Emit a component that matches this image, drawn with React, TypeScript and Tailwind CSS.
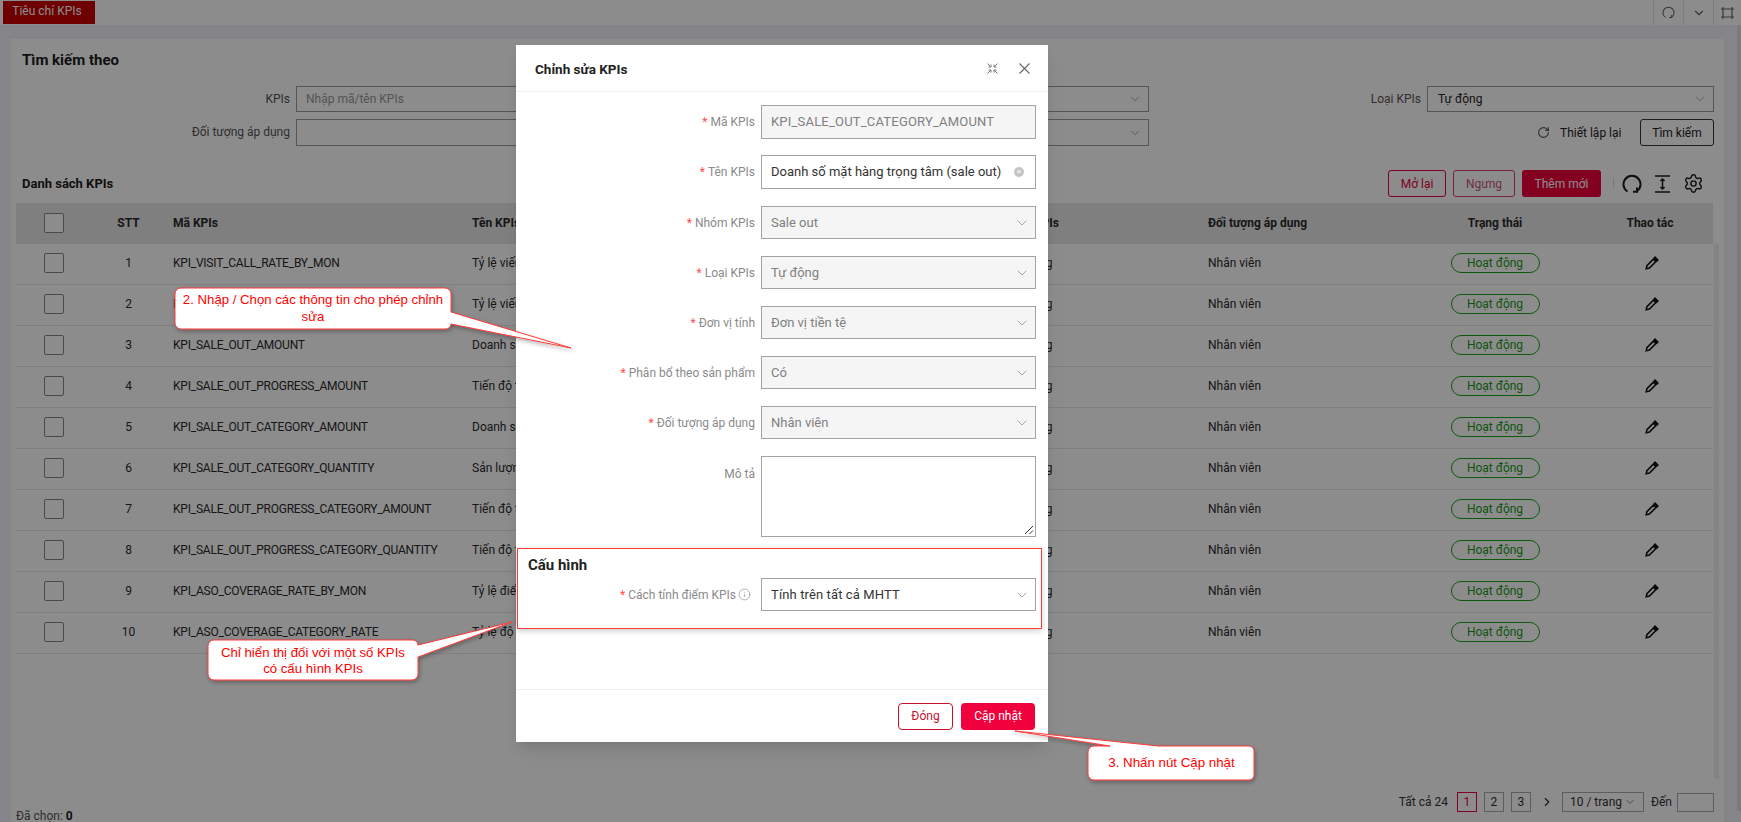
import { ChevronDown, RotateCw, Settings, Info, ChevronRight } from 'lucide-react';

const ROWS = [
  { code: 'KPI_VISIT_CALL_RATE_BY_MON', name: 'Tỷ lệ viếng' },
  { code: 'KPI_VISIT_CALL_RATE', name: 'Tỷ lệ viếng' },
  { code: 'KPI_SALE_OUT_AMOUNT', name: 'Doanh số' },
  { code: 'KPI_SALE_OUT_PROGRESS_AMOUNT', name: 'Tiến độ t' },
  { code: 'KPI_SALE_OUT_CATEGORY_AMOUNT', name: 'Doanh số' },
  { code: 'KPI_SALE_OUT_CATEGORY_QUANTITY', name: 'Sản lượng' },
  { code: 'KPI_SALE_OUT_PROGRESS_CATEGORY_AMOUNT', name: 'Tiến độ t' },
  { code: 'KPI_SALE_OUT_PROGRESS_CATEGORY_QUANTITY', name: 'Tiến độ t' },
  { code: 'KPI_ASO_COVERAGE_RATE_BY_MON', name: 'Tỷ lệ điểm' },
  { code: 'KPI_ASO_COVERAGE_CATEGORY_RATE', name: 'Tỷ lệ độ' },
];

const FIELDS = [
  { label: 'Nhóm KPIs', value: 'Sale out' },
  { label: 'Loại KPIs', value: 'Tự động' },
  { label: 'Đơn vị tính', value: 'Đơn vị tiền tệ' },
  { label: 'Phân bổ theo sản phẩm', value: 'Có' },
  { label: 'Đối tượng áp dụng', value: 'Nhân viên' },
];

function Label({ text, required = true }: { text: string; required?: boolean }) {
  return (
    <div className="w-[245px] shrink-0 text-right text-[12px] text-[#8a8a8a] pr-[6px]">
      {required && <span className="text-[#ff4d4f] mr-[3px]">*</span>}
      {text}
    </div>
  );
}

function ExpandIcon() {
  return (
    <svg width="11" height="11" viewBox="0 0 11 11" fill="none" stroke="#777" strokeWidth="1">
      <path d="M0.5 0.5 3.5 3.5M10.5 0.5 7.5 3.5M0.5 10.5 3.5 7.5M10.5 10.5 7.5 7.5" />
      <path d="M4 1.5V4H1.5M7 1.5V4H9.5M4 9.5V7H1.5M7 9.5V7H9.5" />
    </svg>
  );
}

function CloseIcon() {
  return (
    <svg width="11" height="11" viewBox="0 0 11 11" fill="none" stroke="#666" strokeWidth="1.1">
      <path d="M0.5 0.5 10.5 10.5M10.5 0.5 0.5 10.5" />
    </svg>
  );
}

function HeightIcon() {
  return (
    <svg width="17" height="18" viewBox="0 0 17 18" fill="none" stroke="#1a1a1a" strokeWidth="1.5">
      <path d="M1 1h15M1 17h15M8.5 4v10M6.5 6l2-2 2 2M6.5 12l2 2 2-2" />
    </svg>
  );
}

function ReloadIcon({ size = 20, color = '#1a1a1a', stroke = 2 }: { size?: number; color?: string; stroke?: number }) {
  return (
    <svg width={size} height={size} viewBox="0 0 20 20" fill="none" stroke={color} strokeWidth={stroke}>
      <path d="M5.5 17.5A8.5 8.5 0 1 1 14.5 17.5" />
      <path d="M15 13.5v4.3h-4" />
    </svg>
  );
}

function PencilIcon() {
  return (
    <svg width="14" height="14" viewBox="0 0 14 14" fill="none" stroke="#111" strokeWidth="1.6">
      <path d="M1.2 12.8l.7-3.2 6.5-6.5 2.5 2.5-6.5 6.5z" />
      <path d="M9 2.2l1-1 2.8 2.8-1 1z" fill="#111" />
    </svg>
  );
}

function Background() {
  return (
    <div className="h-[822px] overflow-hidden bg-[#f2f3f9] text-[12px] text-[#222]">
      {/* top bar */}
      <div className="h-[25px] bg-white flex items-center justify-between">
        <div className="ml-[3px] mt-[-1px] h-[23px] w-[92px] bg-[#c80000] text-white text-[12px] pr-[4px] pb-[2px] flex items-center justify-center">Tiêu chí KPIs</div>
        <div className="flex h-full items-center text-[#666]">
          <div className="w-[30px] h-full border-l border-[#e6e6e6] flex items-center justify-center"><ReloadIcon size={13} color="#666" stroke={1.6} /></div>
          <div className="w-[30px] h-full border-l border-[#e6e6e6] flex items-center justify-center"><ChevronDown size={14} /></div>
          <div className="w-[28px] h-full border-l border-[#e6e6e6] flex items-center justify-center">
            <svg width="13" height="12" viewBox="0 0 13 12" fill="none" stroke="#666" strokeWidth="1.2">
              <path d="M2 2h9v8H2zM0 2h3M10 2h3M0 10h3M10 10h3M2 0v3M11 0v3M2 9v3M11 9v3" />
            </svg>
          </div>
        </div>
      </div>

      <div className="flex">
        <div className="ml-[11px] mt-[14px] w-[1713px] h-[783px] bg-white flex flex-col">
          <div className="pl-[11px] pt-[10px] text-[15px] font-bold h-[47px] text-[#1c1c1c]">Tìm kiếm theo</div>

          {/* filter */}
          <div className="flex items-start">
            <div className="w-[285px] text-right pr-[6px] leading-[26px] text-[#555]">KPIs</div>
            <div className="w-[443px] h-[26px] border border-[#9b9b9b] pl-[9px] leading-[24px] text-[#999]">Nhập mã/tên KPIs</div>
            <div className="w-[410px] h-[26px] border border-[#9b9b9b] flex items-center justify-end pr-[6px] text-[#999]"><ChevronDown size={14} strokeWidth={1.4} /></div>
            <div className="w-[278px] text-right pr-[6px] leading-[26px] text-[#555]">Loại KPIs</div>
            <div className="w-[287px] h-[26px] border border-[#9b9b9b] pl-[10px] pr-[6px] leading-[24px] flex items-center justify-between">
              Tự động
              <ChevronDown size={14} strokeWidth={1.4} className="text-[#999]" />
            </div>
          </div>
          <div className="flex items-start mt-[7px]">
            <div className="w-[285px] text-right pr-[6px] leading-[27px] text-[#555]">Đối tượng áp dụng</div>
            <div className="w-[443px] h-[27px] border border-[#9b9b9b]"></div>
            <div className="w-[410px] h-[27px] border border-[#9b9b9b] flex items-center justify-end pr-[6px] text-[#999]"><ChevronDown size={14} strokeWidth={1.4} /></div>
            <div className="flex items-center ml-[388px]">
              <RotateCw size={13} className="text-[#555]" />
              <span className="ml-[10px] w-[80px]">Thiết lập lại</span>
              <div className="w-[74px] h-[27px] border border-[#333] rounded-[3px] flex items-center justify-center">Tìm kiếm</div>
            </div>
          </div>

          {/* list header */}
          <div className="flex items-center justify-between mt-[24px] h-[27px] pl-[11px] pr-[20px]">
            <div className="text-[13px] font-bold text-[#1c1c1c]">Danh sách KPIs</div>
            <div className="flex items-center">
              <div className="w-[58px] h-[27px] border border-[#e8003d] rounded-[3px] text-[#e8003d] flex items-center justify-center">Mở lại</div>
              <div className="ml-[7px] w-[62px] h-[27px] border border-[#d9406a] rounded-[3px] text-[#c9567a] flex items-center justify-center">Ngưng</div>
              <div className="ml-[7px] w-[79px] h-[27px] bg-[#f0003c] rounded-[3px] text-white flex items-center justify-center">Thêm mới</div>
              <div className="ml-[12px] h-[11px] border-l border-[#ddd]"></div>
              <div className="ml-[8px] flex items-center gap-[12px]">
                <ReloadIcon />
                <HeightIcon />
                <Settings size={21} strokeWidth={1.6} className="text-[#1a1a1a]" />
              </div>
            </div>
          </div>

          {/* table */}
          <div className="mt-[6px] ml-[5px] flex-1 flex flex-col">
            <div className="flex">
              <div className="w-[1697px]">
                <div className="h-[41px] pb-[2px] bg-[#e8e8e8] flex items-center font-bold text-[#2a2a2a]">
                  <div className="w-[90px] pl-[28px] flex items-center"><div className="w-[20px] h-[20px] border border-[#888] rounded-[2px] bg-white"></div></div>
                  <div className="w-[45px] text-center">STT</div>
                  <div className="w-[321px] pl-[22px]">Mã KPIs</div>
                  <div className="w-[536px]">Tên KPIs</div>
                  <div className="w-[200px]">Loại KPIs</div>
                  <div className="w-[200px]">Đối tượng áp dụng</div>
                  <div className="w-[174px] text-center">Trạng thái</div>
                  <div className="w-[131px] pl-[5px] text-center">Thao tác</div>
                </div>
                {ROWS.map((r, i) => (
                  <div key={r.code} className="h-[41px] pb-[2px] border-b border-[#e8e8e8] flex items-center text-[#2a2a2a]">
                    <div className="w-[90px] pl-[28px] flex items-center"><div className="w-[20px] h-[20px] border border-[#888] rounded-[2px] bg-white"></div></div>
                    <div className="w-[45px] text-center">{i + 1}</div>
                    <div className="w-[321px] pl-[22px] tracking-[-0.22px]">{r.code}</div>
                    <div className="w-[536px]">{r.name}</div>
                    <div className="w-[200px]">Tự động</div>
                    <div className="w-[200px]">Nhân viên</div>
                    <div className="w-[174px] flex justify-center">
                      <div className="w-[89px] h-[20px] rounded-full border border-[#1aa31a] text-[#1a9a1a] flex items-center justify-center">Hoạt động</div>
                    </div>
                    <div className="w-[131px] pl-[9px] flex justify-center"><PencilIcon /></div>
                  </div>
                ))}
              </div>
              <div className="mt-[41px] ml-[1px] w-[5px] h-[535px] bg-[#f1f1f1]"></div>
            </div>
            <div className="w-[1698px] mt-auto flex items-center justify-between h-[40px]">
              <div className="pt-[28px] text-[#555]">Đã chọn: <span className="font-bold text-[#222]">0</span></div>
              <div className="flex items-center text-[#333]">
                <span>Tất cả 24</span>
                <div className="ml-[9px] w-[20px] h-[20px] border border-[#e8003d] text-[#e8003d] flex items-center justify-center">1</div>
                <div className="ml-[7px] w-[20px] h-[20px] border border-[#aaa] flex items-center justify-center">2</div>
                <div className="ml-[7px] w-[20px] h-[20px] border border-[#aaa] flex items-center justify-center">3</div>
                <ChevronRight size={14} className="ml-[9px]" />
                <div className="ml-[8px] w-[82px] h-[20px] border border-[#aaa] flex items-center justify-between px-[7px]">10 / trang<ChevronDown size={12} className="text-[#888]" /></div>
                <span className="ml-[7px]">Đến</span>
                <div className="ml-[5px] w-[37px] h-[19px] border border-[#aaa]"></div>
              </div>
            </div>
          </div>
        </div>
        <div className="ml-[13px] w-[4px] h-[786px] bg-[#e0e0e0]"></div>
      </div>
    </div>
  );
}

function Modal() {
  return (
    <div className="absolute left-[516px] top-[45px] w-[532px] h-[697px] bg-white flex flex-col shadow-lg">
      <div className="h-[47px] border-b border-[#eee] flex items-center justify-between pl-[19px] pr-[18px]">
        <span className="pt-[3px] text-[13.5px] font-bold text-[#222]">Chỉnh sửa KPIs</span>
        <div className="flex items-center gap-[21px]">
          <ExpandIcon />
          <CloseIcon />
        </div>
      </div>

      <div className="pt-[13px] pr-[12px] flex flex-col">
        <div className="flex items-center">
          <Label text="Mã KPIs" />
          <div className="flex-1 h-[34px] border border-[#a3a3a3] bg-[#f5f5f5] pl-[9px] text-[13px] tracking-[0.2px] leading-[32px] text-[#808080]">KPI_SALE_OUT_CATEGORY_AMOUNT</div>
        </div>
        <div className="flex items-center mt-[16px]">
          <Label text="Tên KPIs" />
          <div className="flex-1 h-[34px] border border-[#a3a3a3] pl-[9px] pr-[11px] text-[13px] text-[#333] flex items-center justify-between">
            Doanh số mặt hàng trọng tâm (sale out)
            <span className="w-[10px] h-[10px] rounded-full bg-[#c4c4c4] text-white text-[8px] leading-[10px] text-center">×</span>
          </div>
        </div>
        {FIELDS.map(f => (
          <div key={f.label} className="flex items-center mt-[17px]">
            <Label text={f.label} />
            <div className="flex-1 h-[33px] border border-[#a3a3a3] bg-[#f5f5f5] pl-[9px] pr-[5px] text-[13px] text-[#808080] flex items-center justify-between">
              {f.value}
              <ChevronDown size={16} strokeWidth={1.1} className="text-[#888]" />
            </div>
          </div>
        ))}
        <div className="flex items-start mt-[17px]">
          <div className="pt-[9px]"><Label text="Mô tả" required={false} /></div>
          <div className="relative flex-1 h-[81px] border border-[#a3a3a3]">
            <svg className="absolute right-[1px] bottom-[1px]" width="10" height="10" viewBox="0 0 10 10" stroke="#333" strokeWidth="1">
              <path d="M1 9 9 1M5.5 9 9 5.5" />
            </svg>
          </div>
        </div>
      </div>

      <div className="mt-[17px] pl-[12px] text-[15px] font-bold text-[#222] h-[24px]">Cấu hình</div>
      <div className="flex items-center pr-[12px]">
        <div className="w-[245px] shrink-0 text-right text-[12px] text-[#8a8a8a] pr-[10px] flex items-center justify-end">
          <span className="text-[#ff4d4f] mr-[3px]">*</span>Cách tính điểm KPIs
          <Info size={13} strokeWidth={1.2} className="ml-[2px] text-[#888]" />
        </div>
        <div className="flex-1 h-[33px] border border-[#a3a3a3] pl-[9px] pr-[5px] text-[13px] tracking-[0.12px] text-[#333] flex items-center justify-between">
          Tính trên tất cả MHTT
          <ChevronDown size={16} strokeWidth={1.1} className="text-[#888]" />
        </div>
      </div>

      <div className="mt-auto h-[53px] border-t border-[#eee] flex items-center justify-end pr-[13px] text-[12px]">
        <div className="w-[55px] h-[27px] border border-[#c8102e] rounded-[4px] text-[#c8102e] flex items-center justify-center">Đóng</div>
        <div className="ml-[8px] w-[74px] h-[27px] bg-[#f0003c] rounded-[4px] text-white flex items-center justify-center">Cập nhật</div>
      </div>
    </div>
  );
}

// annotation callouts drawn on top of the screenshot
function Callouts() {
  return (
    <>
      <svg className="absolute left-0 top-0 pointer-events-none" width="1741" height="822" fill="none">
        <defs>
          <filter id="sh" x="-10%" y="-10%" width="120%" height="130%">
            <feDropShadow dx="1" dy="2" stdDeviation="2" floodColor="#000" floodOpacity="0.3" />
          </filter>
        </defs>
        <path filter="url(#sh)" fill="#fff" stroke="#ff3b3b" strokeWidth="1"
          d="M181 288H445a6 6 0 0 1 6 6V312L571 348 451 324a6 6 0 0 1-6 5H181a6 6 0 0 1-6-6V294a6 6 0 0 1 6-6z" />
        <path filter="url(#sh)" fill="#fff" stroke="#ff3b3b" strokeWidth="1"
          d="M214 640H412a6 6 0 0 1 6 5L512 622 418 657V674a6 6 0 0 1-6 6H214a6 6 0 0 1-6-6V646a6 6 0 0 1 6-6z" />
        <path filter="url(#sh)" fill="#fff" stroke="#ff3b3b" strokeWidth="1"
          d="M1094 746H1110L1015 731 1158 746H1249a5 5 0 0 1 5 5V775a5 5 0 0 1-5 5H1094a6 6 0 0 1-6-6V752a6 6 0 0 1 6-6z" />
      </svg>
      <div className="absolute left-[175px] top-[291px] w-[276px] text-center font-['Liberation_Sans',sans-serif] text-[13.2px] leading-[17px] text-[#f00]">2. Nhập / Chọn các thông tin cho phép chỉnh sửa</div>
      <div className="absolute left-[208px] top-[645px] w-[210px] text-center font-['Liberation_Sans',sans-serif] text-[13.2px] leading-[16px] text-[#f00]">Chỉ hiển thị đối với một số KPIs<br />có cấu hình KPIs</div>
      <div className="absolute left-[1088px] top-[754px] w-[167px] text-center font-['Liberation_Sans',sans-serif] text-[13.3px] leading-[17px] text-[#f00]">3. Nhấn nút Cập nhật</div>
      <div className="absolute left-[517px] top-[548px] w-[525px] h-[81px] border border-[#ff3b3b] shadow-[0_2px_6px_rgba(0,0,0,0.2)]"></div>
    </>
  );
}

export default function App() {
  return (
    <div className="relative w-[1741px] h-[822px] overflow-hidden font-['Roboto',sans-serif]">
      <Background />
      <div className="absolute inset-0 bg-black/45"></div>
      <Modal />
      <Callouts />
    </div>
  );
}
